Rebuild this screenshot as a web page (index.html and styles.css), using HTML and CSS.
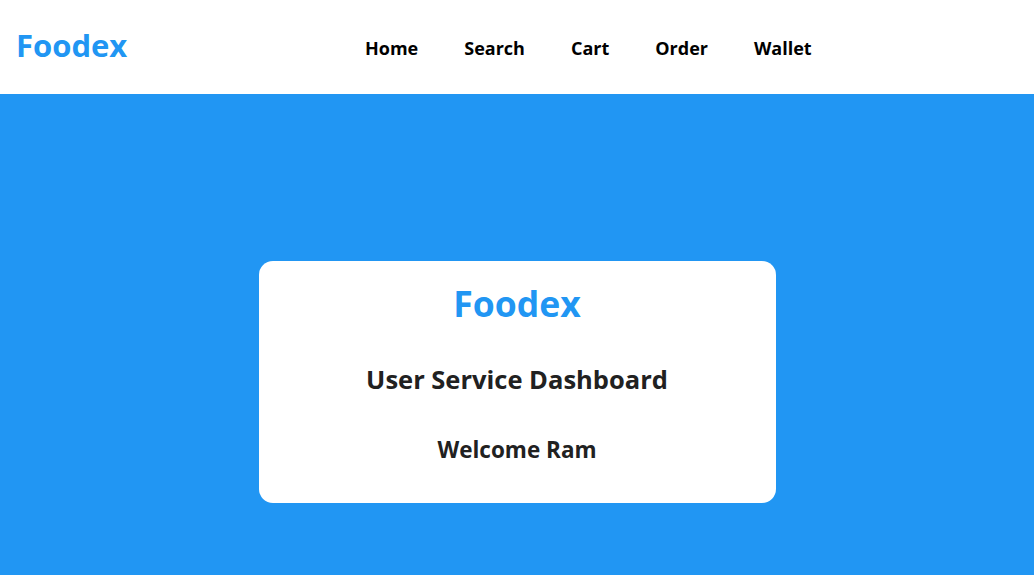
FILE: index.html
```html
<!DOCTYPE html>
<html lang="en">
<head>
<meta charset="utf-8">
<title>Foodex</title>
<link rel="stylesheet" href="styles.css">
</head>
<body>
<header class="topbar">
  <div class="brand">Foodex</div>
  <nav class="menu">
    <a href="#" class="menu-link">Home</a>
    <a href="#" class="menu-link">Search</a>
    <a href="#" class="menu-link">Cart</a>
    <a href="#" class="menu-link">Order</a>
    <a href="#" class="menu-link">Wallet</a>
  </nav>
</header>
<main class="hero">
  <section class="card">
    <h1 class="card-title">Foodex</h1>
    <h2 class="card-sub">User Service Dashboard</h2>
    <h3 class="card-welcome">Welcome Ram</h3>
  </section>
</main>
</body>
</html>
```
FILE: styles.css
```css
html, body {
  margin: 0;
  padding: 0;
}
body {
  font-family: "Open Sans", "Noto Sans", sans-serif;
  background: #ffffff;
  width: 100vw;
}
.topbar {
  height: 94px;
  display: flex;
  align-items: center;
  padding: 0 16px;
  box-sizing: border-box;
}
.brand {
  font-size: 31px;
  font-weight: 700;
  color: #2196f3;
  margin-top: -5px;
  width: 349px;
}
.menu {
  display: flex;
  gap: 46px;
  margin-top: 2px;
}
.menu-link {
  font-size: 18px;
  font-weight: 700;
  color: #000;
  text-decoration: none;
}
.hero {
  background: #2196f3;
  height: 100vh;
  display: flex;
  align-items: center;
  justify-content: center;
}
.card {
  width: 517px;
  height: 242px;
  background: #fff;
  border-radius: 14px;
  box-sizing: border-box;
  display: flex;
  flex-direction: column;
  align-items: center;
  padding-top: 18px;
}
.card-title {
  margin: 0;
  font-size: 35.5px;
  font-weight: 700;
  color: #2196f3;
  line-height: 48px;
}
.card-sub {
  margin: 35px 0 0;
  font-size: 25.5px;
  font-weight: 700;
  color: #212121;
  line-height: 34px;
}
.card-welcome {
  margin: 39px 0 0;
  font-size: 22.5px;
  font-weight: 700;
  color: #212121;
  line-height: 30px;
}
```
